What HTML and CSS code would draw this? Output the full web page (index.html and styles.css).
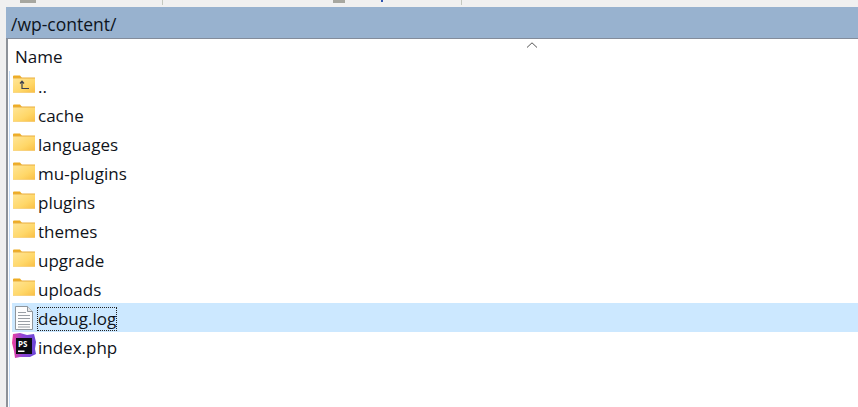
FILE: index.html
```html
<!DOCTYPE html>
<html lang="en">
<head>
<meta charset="utf-8">
<title>wp-content</title>
<link rel="stylesheet" href="styles.css">
</head>
<body>
<div class="toolbar">
  <span class="tool-item tool-a"></span>
  <span class="tool-sep sep-a"></span>
  <span class="tool-item tool-b"></span>
  <span class="tool-mark"></span>
  <span class="tool-sep sep-b"></span>
</div>
<main class="panel">
  <div class="pathbar">/wp-content/</div>
  <div class="listing">
    <div class="header">Name<svg class="sort" viewBox="0 0 11 6"><path d="M.5 5.500 5.500.8l5 4.700" fill="none" stroke="#555" stroke-width="1"/></svg></div>
    <ul class="rows">
      <li class="row"><svg class="icon" viewBox="0 0 22 18"><use href="#folder"/><path d="M9 6.500v7h7M7 8.500 9 6.200l2 2.300" fill="none" stroke="#3d4150" stroke-width="1.200"/></svg><span class="label">..</span></li>
      <li class="row"><svg class="icon" viewBox="0 0 22 18"><use href="#folder"/></svg><span class="label">cache</span></li>
      <li class="row"><svg class="icon" viewBox="0 0 22 18"><use href="#folder"/></svg><span class="label">languages</span></li>
      <li class="row"><svg class="icon" viewBox="0 0 22 18"><use href="#folder"/></svg><span class="label">mu-plugins</span></li>
      <li class="row"><svg class="icon" viewBox="0 0 22 18"><use href="#folder"/></svg><span class="label">plugins</span></li>
      <li class="row"><svg class="icon" viewBox="0 0 22 18"><use href="#folder"/></svg><span class="label">themes</span></li>
      <li class="row"><svg class="icon" viewBox="0 0 22 18"><use href="#folder"/></svg><span class="label">upgrade</span></li>
      <li class="row"><svg class="icon" viewBox="0 0 22 18"><use href="#folder"/></svg><span class="label">uploads</span></li>
      <li class="row selected"><svg class="icon doc" viewBox="0 0 18 24"><path d="M.5.500h12l5 5v18H.5z" fill="#fdfdfd" stroke="#8f959b"/><path d="M12.500.5v5h5" fill="#e4e6e8" stroke="#8f959b"/><path d="M3 6.500h8M3 9.500h12M3 12.500h12M3 15.500h12M3 18.500h12M3 21h12" stroke="#9a9fa5" stroke-width="1"/></svg><span class="label focused">debug.log</span></li>
      <li class="row"><svg class="icon ps" viewBox="0 0 24 25"><defs><linearGradient id="pg" x1="0" y1="0" x2="1" y2="0"><stop offset="0" stop-color="#ee3f9d"/><stop offset=".45" stop-color="#8f45d8"/><stop offset="1" stop-color="#6a46d6"/></linearGradient></defs><path d="M1 1 8 0l7 2 7-1 2 8-1 7 1 5-6 3H8l-5 1-1-7-2-8z" fill="url(#pg)"/><rect x="4" y="5" width="16" height="16" fill="#0b0b12"/><text x="6" y="13.500" class="ps-text">PS</text><rect x="6" y="17.500" width="6.500" height="1.500" fill="#fff"/></svg><span class="label">index.php</span></li>
    </ul>
  </div>
</main>
<svg class="defs" width="0" height="0" aria-hidden="true">
  <defs>
    <linearGradient id="fg" x1="0" y1="0" x2="1" y2="1"><stop offset="0" stop-color="#ffe596"/><stop offset=".6" stop-color="#ffd768"/><stop offset="1" stop-color="#f9bf45"/></linearGradient>
    <g id="folder"><path d="M0 1.500a1 1 0 0 1 1-1h6l2 2.500H0z" fill="#eeac23"/><rect x="0" y="2.500" width="22" height="15" fill="#e9ae3e"/><rect x="0" y="3.500" width="22" height="14" fill="url(#fg)"/></g>
  </defs>
</svg>
</body>
</html>
```
FILE: styles.css
```css
* { box-sizing: border-box; }
html, body { margin: 0; padding: 0; }
body {
  width: 858px;
  height: 407px;
  overflow: hidden;
  background: #f0f0f0;
  font-family: "Open Sans", "Noto Sans", sans-serif;
  color: #10131a;
}
.toolbar {
  position: relative;
  height: 7px;
  background: #f0f0f0;
}
.tool-sep, .tool-item, .tool-mark { position: absolute; top: 0; }
.tool-sep { width: 1px; height: 5px; background: #c4c8bf; }
.sep-a { left: 162px; }
.sep-b { left: 461px; }
.tool-item { height: 3px; background: #a7a7a0; }
.tool-a { left: 20px; width: 16px; }
.tool-b { left: 333px; width: 12px; }
.tool-mark { left: 381px; width: 2px; height: 2px; background: #2f55b0; }
.panel { margin-left: 6px; background: #fff; }
.pathbar {
  height: 32px;
  padding: 5px 0 0 5px;
  background: #98b2cf;
  border-bottom: 1px solid #838c9b;
  font-size: 17.500px;
  line-height: 24px;
  color: #0d1420;
}
.listing {
  border-left: 2px solid #8d9299;
  height: 368px;
}
.header {
  position: relative;
  height: 32px;
  padding: 6px 0 0 7px;
  font-size: 17px;
  line-height: 24px;
}
.sort {
  position: absolute;
  left: 518px;
  top: 3px;
  width: 12px;
  height: 6px;
}
.rows {
  list-style: none;
  margin: 0 0 0 1px;
  padding: 0 0 0 2px;
  border-left: 1px solid #c5dcf5;
  height: 336px;
}
.row {
  display: flex;
  align-items: center;
  height: 29px;
  padding-left: 1px;
  font-size: 17px;
  line-height: 24px;
}
.row.selected { background: #cce8ff; }
.icon {
  flex: none;
  width: 22px;
  height: 18px;
  margin-right: 2px;
  margin-top: -3px;
}
.doc { width: 18px; height: 24px; margin: 0 4px 0 2px; }
.ps { width: 24px; height: 25px; margin: -2px 1px 0 -1px; }
.ps-text { font: 700 8px "Open Sans", sans-serif; fill: #fff; }
.label { padding: 0 1px; margin-top: 2px; }
.focused { outline: 1px dotted #222; outline-offset: -1px; }
.defs { position: absolute; }
```
